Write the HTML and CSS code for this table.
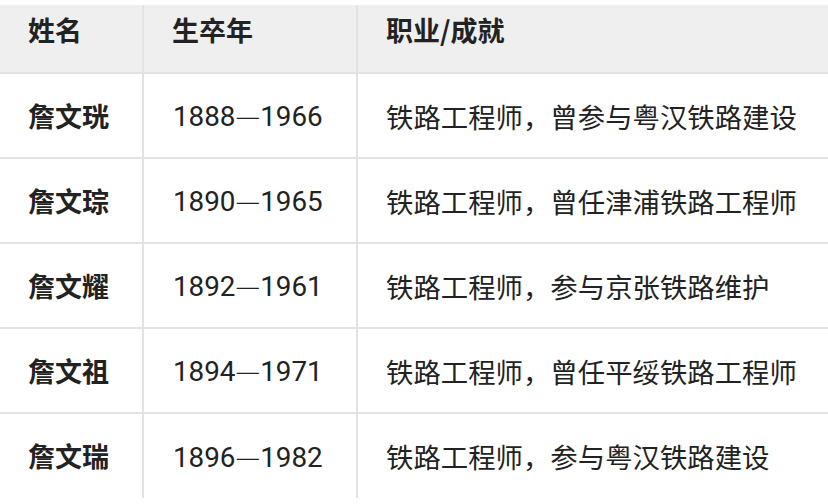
FILE: index.html
```html
<!DOCTYPE html>
<html lang="zh">
<head>
<meta charset="utf-8">
<link rel="stylesheet" href="styles.css">
</head>
<body>
<table class="people">
  <colgroup>
    <col class="c-name">
    <col class="c-years">
    <col class="c-job">
  </colgroup>
  <thead>
    <tr><th>姓名</th><th>生卒年</th><th>职业/成就</th></tr>
  </thead>
  <tbody>
    <tr><td class="name">詹文珖</td><td class="years">1888<span class="dash">—</span>1966</td><td>铁路工程师，曾参与粤汉铁路建设</td></tr>
    <tr><td class="name">詹文琮</td><td class="years">1890<span class="dash">—</span>1965</td><td>铁路工程师，曾任津浦铁路工程师</td></tr>
    <tr><td class="name">詹文耀</td><td class="years">1892<span class="dash">—</span>1961</td><td>铁路工程师，参与京张铁路维护</td></tr>
    <tr><td class="name">詹文祖</td><td class="years">1894<span class="dash">—</span>1971</td><td>铁路工程师，曾任平绥铁路工程师</td></tr>
    <tr><td class="name">詹文瑞</td><td class="years">1896<span class="dash">—</span>1982</td><td>铁路工程师，参与粤汉铁路建设</td></tr>
  </tbody>
</table>
</body>
</html>
```
FILE: styles.css
```css
html, body {
  margin: 0;
  padding: 0;
  background: #ffffff;
}
body {
  padding-top: 5px;
  font-family: "Noto Sans CJK SC", "Noto Sans", sans-serif;
  color: #222222;
}
.people {
  width: 828px;
  border-collapse: collapse;
  table-layout: fixed;
}
.c-name { width: 143px; }
.c-years { width: 214px; }
.c-job { width: auto; }
.people th {
  background: #efefef;
  font-size: 27px;
  font-weight: 700;
  text-align: left;
  vertical-align: top;
  height: 68px;
  box-sizing: border-box;
  padding: 10px 0 0 28px;
  line-height: 30px;
  border-bottom: 2px solid #e3e3e3;
}
.people td {
  font-size: 27.4px;
  font-weight: 400;
  height: 85px;
  box-sizing: border-box;
  padding: 0 0 0 28px;
  line-height: 30px;
  vertical-align: middle;
  border-top: 2px solid #e3e3e3;
  white-space: nowrap;
}
.people th + th,
.people td + td {
  border-left: 2px solid #e3e3e3;
}
.people td.name {
  font-weight: 700;
  font-size: 27px;
}
.people td.years {
  font-family: Roboto, "Noto Sans CJK SC", sans-serif;
  font-size: 27.8px;
  padding-left: 29px;
}
.dash {
  font-family: "Noto Sans CJK SC", sans-serif;
  font-weight: 300;
}
```
